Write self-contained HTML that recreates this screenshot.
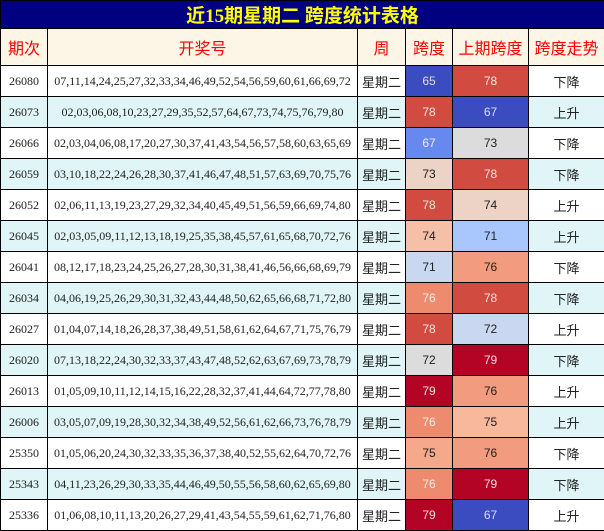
<!DOCTYPE html>
<html><head><meta charset="utf-8">
<style>
html,body{margin:0;padding:0;background:#fff;}
body{width:604px;height:531px;overflow:hidden;}
table{border-collapse:collapse;table-layout:fixed;width:604px;}
td,th{border:1px solid #000;padding:0;text-align:center;overflow:hidden;white-space:nowrap;}
.title{background:#000080;color:#ffff00;font:bold 19px "Liberation Serif","Noto Sans CJK SC",serif;height:27px;border:1px solid #000;}
th{background:#fdf5e6;color:#ff0000;font:16px "Liberation Sans","Noto Sans CJK SC",sans-serif;height:36px;font-weight:normal;}
td{height:30px;font:12px "Liberation Serif","Noto Sans CJK SC",serif;color:#222;}
td.w{font:13px "Liberation Sans","Noto Sans CJK SC",sans-serif;}
td.n{font:12px "Liberation Sans",sans-serif;}
tr.a td{background:#fff;}
tr.b td{background:#e0f5f7;}
tr td.A{background:#3b4cc0;color:#dde;}
tr td.B{background:#6788ee;color:#eef;}
tr td.C{background:#aac7fd;color:#222;}
tr td.D{background:#c9d7f0;color:#222;}
tr td.E{background:#dcdcdc;color:#222;}
tr td.F{background:#ecd3c5;color:#222;}
tr td.G{background:#f5c0a7;color:#222;}
tr td.H{background:#f39b7e;color:#222;}
tr td.H2{background:#ee8a6e;color:#f4eee8;}
tr td.K{background:#f7b89c;color:#222;}
tr td.L{background:#f5a88a;color:#222;}
tr td.I{background:#d24b40;color:#f4e4e0;}
tr td.J{background:#b40426;color:#f4dde0;}
</style></head><body>
<table>
<colgroup><col style="width:47px"><col style="width:310px"><col style="width:48px"><col style="width:47px"><col style="width:76px"><col style="width:76px"></colgroup>
<tr><td class="title" colspan="6">近15期星期二 跨度统计表格</td></tr>
<tr><th>期次</th><th>开奖号</th><th>周</th><th>跨度</th><th>上期跨度</th><th>跨度走势</th></tr>
<tr class="a"><td>26080</td><td>07,11,14,24,25,27,32,33,34,46,49,52,54,56,59,60,61,66,69,72</td><td class="w">星期二</td><td class="n A">65</td><td class="n I">78</td><td class="w">下降</td></tr>
<tr class="b"><td>26073</td><td>02,03,06,08,10,23,27,29,35,52,57,64,67,73,74,75,76,79,80</td><td class="w">星期二</td><td class="n I">78</td><td class="n A">67</td><td class="w">上升</td></tr>
<tr class="a"><td>26066</td><td>02,03,04,06,08,17,20,27,30,37,41,43,54,56,57,58,60,63,65,69</td><td class="w">星期二</td><td class="n B">67</td><td class="n E">73</td><td class="w">下降</td></tr>
<tr class="b"><td>26059</td><td>03,10,18,22,24,26,28,30,37,41,46,47,48,51,57,63,69,70,75,76</td><td class="w">星期二</td><td class="n F">73</td><td class="n I">78</td><td class="w">下降</td></tr>
<tr class="a"><td>26052</td><td>02,06,11,13,19,23,27,29,32,34,40,45,49,51,56,59,66,69,74,80</td><td class="w">星期二</td><td class="n I">78</td><td class="n F">74</td><td class="w">上升</td></tr>
<tr class="b"><td>26045</td><td>02,03,05,09,11,12,13,18,19,25,35,38,45,57,61,65,68,70,72,76</td><td class="w">星期二</td><td class="n G">74</td><td class="n C">71</td><td class="w">上升</td></tr>
<tr class="a"><td>26041</td><td>08,12,17,18,23,24,25,26,27,28,30,31,38,41,46,56,66,68,69,79</td><td class="w">星期二</td><td class="n D">71</td><td class="n H">76</td><td class="w">下降</td></tr>
<tr class="b"><td>26034</td><td>04,06,19,25,26,29,30,31,32,43,44,48,50,62,65,66,68,71,72,80</td><td class="w">星期二</td><td class="n H2">76</td><td class="n I">78</td><td class="w">下降</td></tr>
<tr class="a"><td>26027</td><td>01,04,07,14,18,26,28,37,38,49,51,58,61,62,64,67,71,75,76,79</td><td class="w">星期二</td><td class="n I">78</td><td class="n D">72</td><td class="w">上升</td></tr>
<tr class="b"><td>26020</td><td>07,13,18,22,24,30,32,33,37,43,47,48,52,62,63,67,69,73,78,79</td><td class="w">星期二</td><td class="n E">72</td><td class="n J">79</td><td class="w">下降</td></tr>
<tr class="a"><td>26013</td><td>01,05,09,10,11,12,14,15,16,22,28,32,37,41,44,64,72,77,78,80</td><td class="w">星期二</td><td class="n J">79</td><td class="n H">76</td><td class="w">上升</td></tr>
<tr class="b"><td>26006</td><td>03,05,07,09,19,28,30,32,34,38,49,52,56,61,62,66,73,76,78,79</td><td class="w">星期二</td><td class="n H2">76</td><td class="n K">75</td><td class="w">上升</td></tr>
<tr class="a"><td>25350</td><td>01,05,06,20,24,30,32,33,35,36,37,38,40,52,55,62,64,70,72,76</td><td class="w">星期二</td><td class="n L">75</td><td class="n H">76</td><td class="w">下降</td></tr>
<tr class="b"><td>25343</td><td>04,11,23,26,29,30,33,35,44,46,49,50,55,56,58,60,62,65,69,80</td><td class="w">星期二</td><td class="n H2">76</td><td class="n J">79</td><td class="w">下降</td></tr>
<tr class="a"><td>25336</td><td>01,06,08,10,11,13,20,26,27,29,41,43,54,55,59,61,62,71,76,80</td><td class="w">星期二</td><td class="n J">79</td><td class="n A">67</td><td class="w">上升</td></tr>
</table>
</body></html>
